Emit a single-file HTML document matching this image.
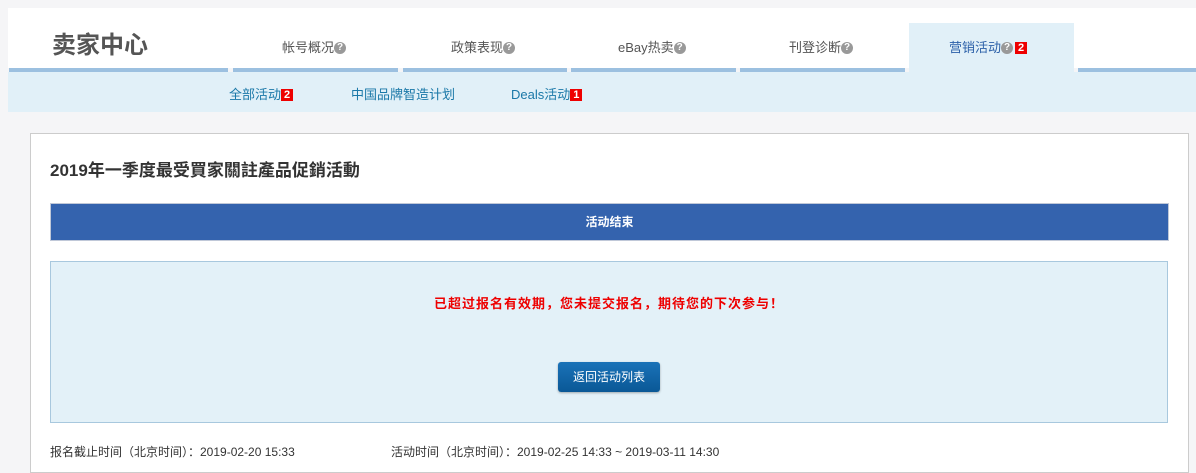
<!DOCTYPE html>
<html><head><meta charset="utf-8"><style>
*{margin:0;padding:0;box-sizing:border-box}
body{width:1196px;height:467px;background:#f5f5f7;font-family:"Liberation Sans","Noto Sans CJK SC",sans-serif;position:relative;overflow:hidden}
.a{position:absolute}
.q{display:inline-block;width:12px;height:12px;border-radius:50%;background:#999;color:#fff;font-size:10px;line-height:12px;text-align:center;font-weight:bold;vertical-align:middle;position:relative;top:-1px}
.b{display:inline-block;background:#e00;color:#fff;font-size:11px;font-weight:bold;line-height:12px;padding:0 3px;vertical-align:middle;position:relative;top:-1px}
.nav{font-size:13px;color:#555;top:37px}
.seg{top:68px;height:4px;background:#9cc0e0}
.sub{font-size:13px;color:#1a78a8;top:84px}
</style></head><body>
<div class="a" style="left:8px;top:8px;width:1188px;height:60px;background:#fff"></div>
<div class="a" style="left:52px;top:25px;font-size:24px;font-weight:bold;color:#555">卖家中心</div>
<div class="a seg" style="left:9px;width:219px"></div>
<div class="a seg" style="left:233px;width:165px"></div>
<div class="a seg" style="left:403px;width:164px"></div>
<div class="a seg" style="left:571px;width:165px"></div>
<div class="a seg" style="left:740px;width:165px"></div>
<div class="a seg" style="left:1078px;width:118px"></div>
<div class="a" style="left:909px;top:23px;width:165px;height:50px;background:#e1f0f8"></div>
<div class="a" style="left:8px;top:72px;width:1188px;height:40px;background:#e1f0f8"></div>
<div class="a nav" style="left:282px">帐号概况<span class="q">?</span></div>
<div class="a nav" style="left:451px">政策表现<span class="q">?</span></div>
<div class="a nav" style="left:618px">eBay热卖<span class="q">?</span></div>
<div class="a nav" style="left:789px">刊登诊断<span class="q">?</span></div>
<div class="a nav" style="left:949px;color:#2a5fa8">营销活动<span class="q">?</span><span class="b" style="margin-left:2px">2</span></div>
<div class="a sub" style="left:229px">全部活动<span class="b">2</span></div>
<div class="a sub" style="left:351px">中国品牌智造计划</div>
<div class="a sub" style="left:511px">Deals活动<span class="b">1</span></div>
<div class="a" style="left:30px;top:133px;width:1159px;height:340px;background:#fff;border:1px solid #ccc"></div>
<div class="a" style="left:50px;top:156px;font-size:17px;font-weight:bold;color:#333">2019年一季度最受買家關註產品促銷活動</div>
<div class="a" style="left:50px;top:203px;width:1119px;height:38px;background:#3463ae;border:1px solid #c0c8d8;color:#fff;font-size:12px;font-weight:bold;text-align:center;line-height:36px">活动结束</div>
<div class="a" style="left:50px;top:261px;width:1118px;height:162px;background:#e3f1f8;border:1px solid #a8c8de"></div>
<div class="a" style="left:50px;top:293px;width:1118px;text-align:center;color:#e00;font-size:13px;font-weight:bold;letter-spacing:1px">已超过报名有效期，您未提交报名，期待您的下次参与！</div>
<div class="a" style="left:558px;top:362px;width:102px;height:30px;border-radius:3px;background:linear-gradient(#1a72b8,#0a5896);color:#fff;font-size:12px;text-align:center;line-height:30px;box-shadow:0 1px 2px rgba(0,0,0,.3)">返回活动列表</div>
<div class="a" style="left:50px;top:443px;font-size:12px;color:#333">报名截止时间（北京时间）：2019-02-20 15:33</div>
<div class="a" style="left:391px;top:443px;font-size:12px;color:#333">活动时间（北京时间）：2019-02-25 14:33 ~ 2019-03-11 14:30</div>
</body></html>
